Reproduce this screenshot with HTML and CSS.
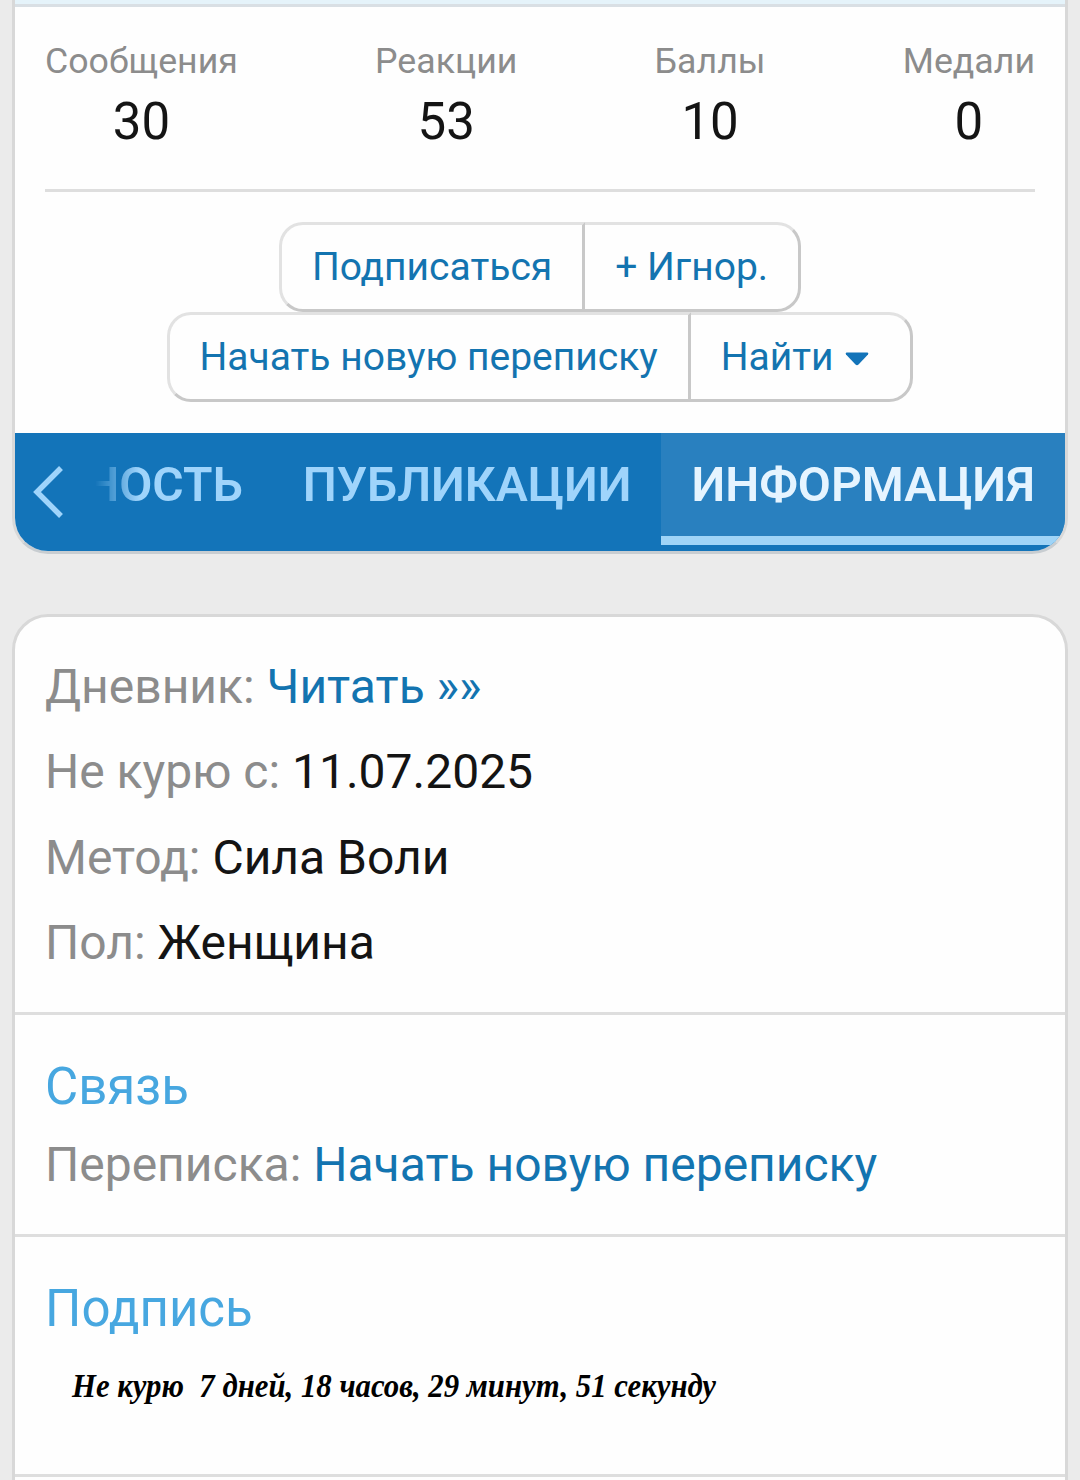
FILE: index.html
```html
<!DOCTYPE html>
<html lang="ru">
<head>
    <meta charset="UTF-8">
    <meta name="viewport" content="width=device-width, initial-scale=1.0">
    <title>Профиль - Информация</title>
    <link rel="stylesheet" href="styles.css">
</head>
<body>
    <div class="profile">
        <div class="profile-top"></div>
        <div class="stats">
            <dl><dt>Сообщения</dt><dd>30</dd></dl>
            <dl><dt>Реакции</dt><dd>53</dd></dl>
            <dl><dt>Баллы</dt><dd>10</dd></dl>
            <dl><dt>Медали</dt><dd>0</dd></dl>
        </div>
        <div class="buttons">
            <div class="button-group">
                <a href="#" class="button">Подписаться</a>
                <a href="#" class="button">+ Игнор.</a>
            </div>
            <div class="button-group">
                <a href="#" class="button button-talk">Начать новую переписку</a>
                <a href="#" class="button button-menu">Найти
                    <svg class="caret" width="24" height="14" viewBox="0 0 24 14"><path d="M1.500 .500h21q1.500 .500 .500 2l-9.500 10q-1.500 1.500-3 0l-9.500-10q-1-1.500 .500-2z" fill="#1374b9"/></svg>
                </a>
            </div>
        </div>
        <nav class="tabs">
            <a href="#" class="tabs-prev">
                <svg width="32" height="54" viewBox="0 0 32 54"><path d="M28 3L4 27L28 51" fill="none" stroke="#9fd4fb" stroke-width="5.500"/></svg>
            </a>
            <div class="tabs-scroll">
                <a href="#" class="tab">Активность</a>
                <a href="#" class="tab">Публикации</a>
                <a href="#" class="tab active">Информация</a>
            </div>
        </nav>
    </div>

    <div class="about">
        <div class="section">
            <div class="row"><span>Дневник:</span> <a href="#">Читать »»</a></div>
            <div class="row"><span>Не курю с:</span> 11.07.2025</div>
            <div class="row"><span>Метод:</span> Сила Воли</div>
            <div class="row"><span>Пол:</span> Женщина</div>
        </div>
        <div class="section">
            <h4>Связь</h4>
            <div class="row"><span>Переписка:</span> <a href="#">Начать новую переписку</a></div>
        </div>
        <div class="section section-signature">
            <h4>Подпись</h4>
            <svg class="signature" width="700" height="70">
                <text x="27" y="44" textLength="644" lengthAdjust="spacingAndGlyphs" xml:space="preserve">Не курю  7 дней, 18 часов, 29 минут, 51 секунду</text>
            </svg>
        </div>
    </div>
</body>
</html>
```
FILE: styles.css
```css
* {
    box-sizing: border-box;
}
body {
    margin: 0;
    height: 1480px;
    overflow: hidden;
    background-color: #ebebeb;
    color: #141414;
    font-family: Roboto, sans-serif;
    font-size: 48px;
    line-height: 1.4;
}
a {
    color: #1374b0;
    text-decoration: none;
}
.profile, .about {
    margin: 0 12px;
    background-color: #fefefe;
    border: 3px solid #d8d8d8;
}
.profile {
    height: 554px;
    border-top: none;
    border-bottom-color: #c8cdd1;
    border-radius: 0 0 36px 36px;
    overflow: hidden;
}
.profile-top {
    height: 7px;
    background-color: #e5f3fa;
    border-bottom: 3px solid #d9dfe4;
}
.stats {
    display: flex;
    justify-content: space-between;
    height: 185px;
    margin: 0 30px;
    padding-top: 30px;
    border-bottom: 3px solid #dedede;
    text-align: center;
}
.stats dl, .stats dd {
    margin: 0;
}
.stats dt {
    color: #8c8c8c;
    font-size: 35.700px;
    line-height: 49px;
}
.stats dd {
    font-size: 51px;
    line-height: 71px;
}
.buttons {
    display: flex;
    flex-direction: column;
    align-items: center;
    height: 241px;
    padding-top: 30px;
}
.button-group {
    display: flex;
}
.button {
    height: 90px;
    padding: 0 30px;
    border: 3px solid;
    border-color: #e2e2e2 #c8c8c8 #c8c8c8 #e2e2e2;
    font-size: 39px;
    line-height: 84px;
    white-space: nowrap;
}
.button:first-child {
    border-radius: 24px 0 0 24px;
}
.button:last-child {
    border-left: none;
    border-radius: 0 24px 24px 0;
}
.button-talk {
    padding-left: 29px;
}
.button-menu {
    display: flex;
    align-items: center;
    padding-right: 41px;
}
.caret {
    margin: 4px 0 0 11px;
}
.tabs {
    display: flex;
    height: 118px;
    background-color: #1374b9;
}
.tabs-prev {
    flex: none;
    width: 80px;
    padding: 32px 0 0 18px;
    line-height: 0;
}
.tabs-scroll {
    display: flex;
    justify-content: flex-end;
    flex: 1;
    overflow: hidden;
    -webkit-mask-image: linear-gradient(to right, transparent, #000 44px);
    mask-image: linear-gradient(to right, transparent, #000 44px);
}
.tab {
    flex: none;
    height: 112px;
    padding: 18px 30px 0;
    border-bottom: 9px solid transparent;
    color: #9fd4fb;
    font-weight: 600;
    text-transform: uppercase;
}
.tab.active {
    background-color: #2980bf;
    border-color: #9fd4f7;
    color: #e5f4ff;
}
.about {
    height: 900px;
    margin-top: 60px;
    border-radius: 36px 36px 0 0;
}
.section {
    padding: 36px 30px;
    border-bottom: 3px solid #dedede;
}
.row {
    height: 67px;
    line-height: 67px;
    white-space: nowrap;
}
.row + .row {
    margin-top: 18.400px;
}
.row span {
    color: #8c8c8c;
}
h4 {
    height: 71px;
    margin: 0 0 9px;
    color: #47a7e0;
    font-size: 51px;
    font-weight: 400;
    line-height: 71px;
}
.section-signature {
    height: 240px;
}
.signature {
    display: block;
    overflow: visible;
    font-family: "Liberation Serif", serif;
    font-size: 34px;
    font-style: italic;
    font-weight: 700;
    line-height: 1;
}
```
